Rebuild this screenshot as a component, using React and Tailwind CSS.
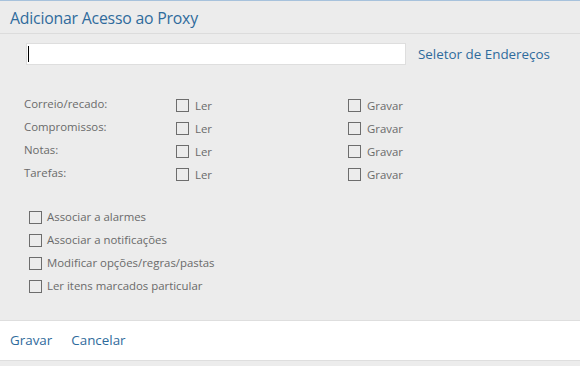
import { useState } from "react";

const folders = ["Correio/recado:", "Compromissos:", "Notas:", "Tarefas:"];
const options = [
  "Associar a alarmes",
  "Associar a notificações",
  "Modificar opções/regras/pastas",
  "Ler itens marcados particular",
];

const Box = () => (
  <span className="inline-block w-[13px] h-[13px] border border-[#6d6d6d] bg-transparent shrink-0" />
);

export default function App() {
  const [addr] = useState("");

  return (
    <div
      className="w-[580px] h-[366px] bg-[#ececec] border-t border-[#a7c2dc] flex flex-col overflow-hidden"
      style={{ fontFamily: "'Open Sans', 'Noto Sans', sans-serif" }}
    >
      {/* header */}
      <div className="h-[33px] flex items-center px-[10px] pt-[3px] border-b border-[#dcdcdc]">
        <span className="text-[15.8px] text-[#2f6b9c] tracking-[-0.2px]">Adicionar Acesso ao Proxy</span>
      </div>

      {/* address row */}
      <div className="flex items-center pl-[26px] pt-[9px]">
        <div className="w-[380px] h-[22px] bg-white border border-[#dedede] flex items-center pl-[1px]">
          <span className="w-px h-[16px] bg-black" />
          <span className="text-[13px]">{addr}</span>
        </div>
        <span className="ml-[12px] text-[13.4px] text-[#2f6b9c]">Seletor de Endereços</span>
      </div>

      {/* permissions */}
      <div className="flex flex-col pl-[24px] pt-[31px] gap-[4px] text-[11.4px] text-[#6a6a6a]">
        {folders.map((f) => (
          <div key={f} className="flex items-center h-[19px]">
            <span className="w-[152px] -mt-[3px]">{f}</span>
            <div className="w-[172px] flex items-center">
              <Box />
              <span className="ml-[6px] mt-[1px]">Ler</span>
            </div>
            <div className="flex items-center">
              <Box />
              <span className="ml-[6px] mt-[1px]">Gravar</span>
            </div>
          </div>
        ))}
      </div>

      {/* extra options */}
      <div className="flex flex-col pl-[29px] pt-[24px] gap-[4px] text-[11.4px] text-[#6a6a6a]">
        {options.map((o) => (
          <div key={o} className="flex items-center h-[19px]">
            <Box />
            <span className="ml-[5px] -mt-[1px]">{o}</span>
          </div>
        ))}
      </div>

      <div className="flex-1" />

      {/* footer */}
      <div className="h-[41px] bg-white border-t border-[#dedede] border-b flex items-center gap-[19px] px-[10px] text-[13.4px] text-[#2f6b9c] mb-[5px]">
        <span>Gravar</span>
        <span>Cancelar</span>
      </div>
    </div>
  );
}
